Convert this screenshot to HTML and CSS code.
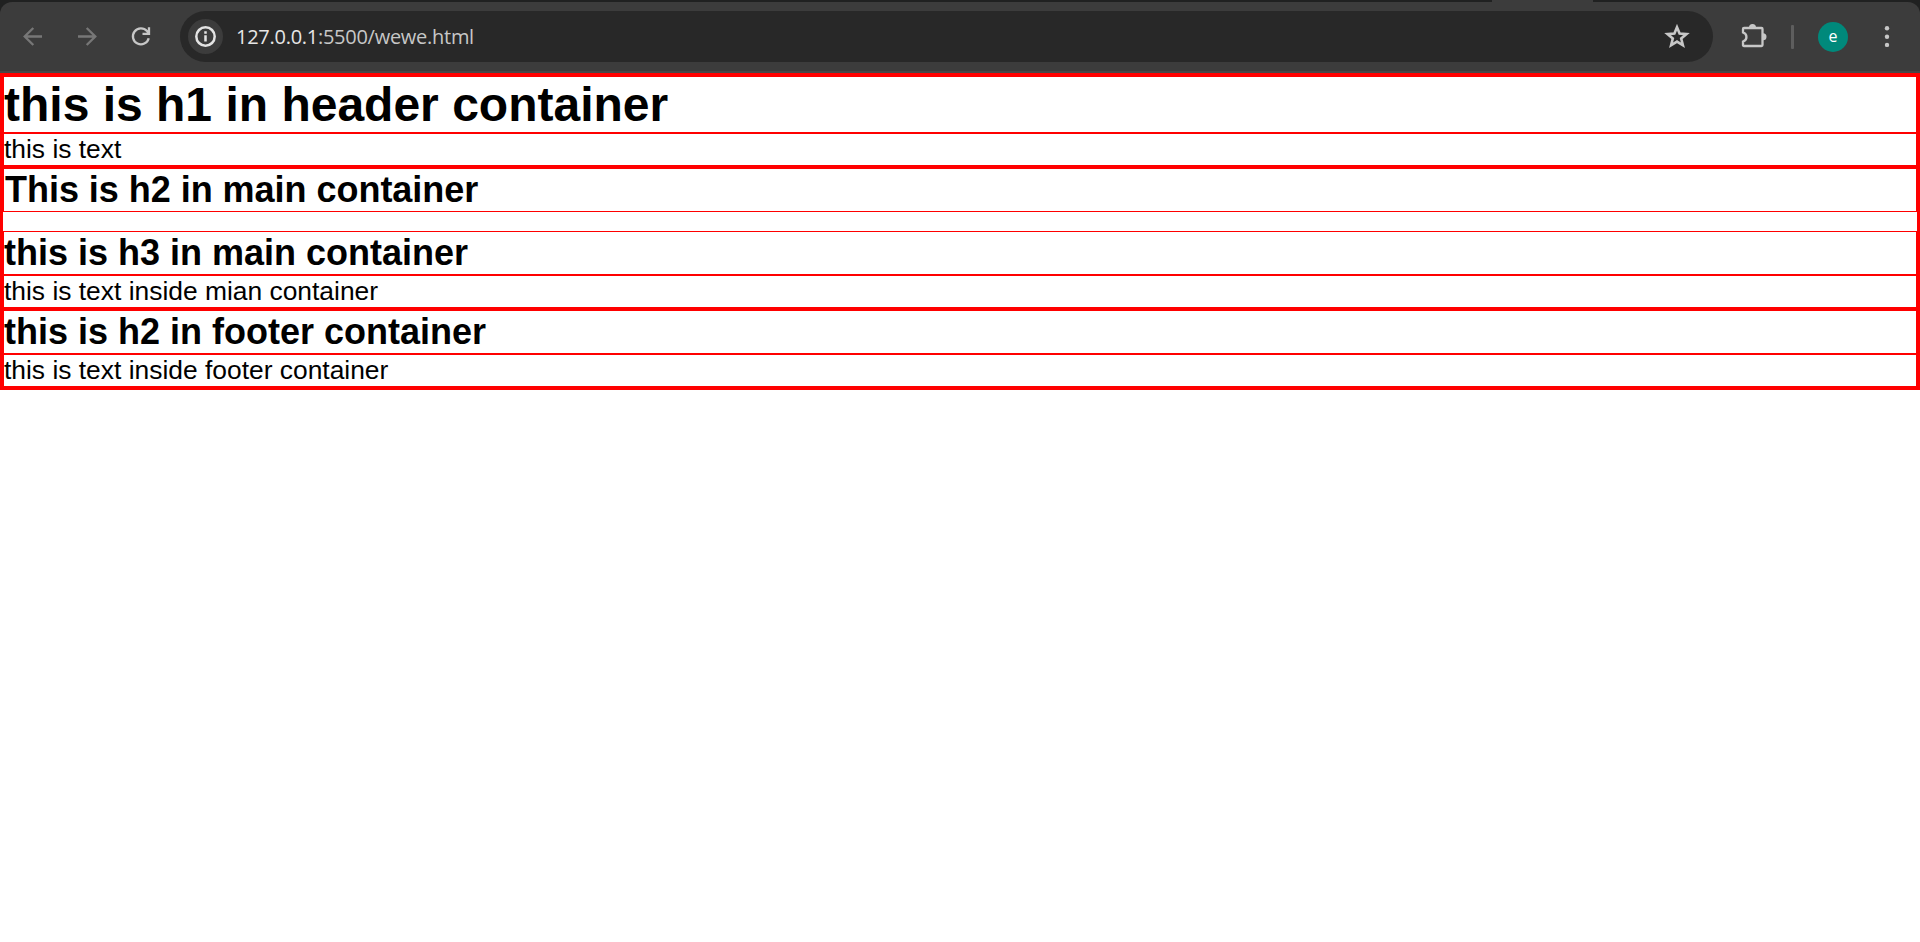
FILE: index.html
```html
<!DOCTYPE html>
<html lang="en">
<head>
<meta charset="utf-8">
<title>wewe</title>
<link rel="stylesheet" href="styles.css">
</head>
<body>
<div class="browser">
  <div class="tab-strip"><div class="active-tab"></div></div>
  <div class="toolbar">
    <svg class="icon back" width="24" height="24" viewBox="0 0 24 24"><path d="M21 12.5H4M12.3 4L3.7 12.5L12.3 21" /></svg>
    <svg class="icon forward" width="24" height="24" viewBox="0 0 24 24"><path d="M2 12.5H19M10.7 4L19.3 12.5L10.7 21" /></svg>
    <svg class="icon reload" width="24" height="24" viewBox="0 0 24 24"><path d="M18.7 14.2A8 8 0 1 1 17 7.1L19 9.4M19 3.2V9.8H12.5" /></svg>
    <div class="address">
      <span class="site-info"><svg width="21" height="21" viewBox="0 0 21 21"><circle cx="10.5" cy="10.5" r="9.2" /><path d="M10.5 9.3V15.5M10.5 5.3V7.8" /></svg></span>
      <span class="url">127.0.0.1<span class="path">:5500/wewe.html</span></span>
      <svg class="star" width="26" height="26" viewBox="0 0 26 26"><path d="M13 3.2L15.6 9.5L22.5 10.1L17.2 14.5L18.9 21.3L13 17.6L7.1 21.3L8.8 14.5L3.5 10.1L10.4 9.5Z" /></svg>
    </div>
    <svg class="puzzle" width="26" height="26" viewBox="0 0 26 26"><path class="outline" d="M3.5 5H20.5Q21.5 5 21.5 6V22Q21.5 23 20.5 23H3Q2 23 2 22V18.6C6.6 17 6.6 11 2 9.4V6Q2 5 3 5Z" /><path class="knob" d="M8 4.5A3.5 3.5 0 0 1 15 4.5ZM22 10.2A3.5 3.5 0 0 1 22 17.2Z" /></svg>
    <span class="divider"></span>
    <span class="avatar">e</span>
    <svg class="menu" width="6" height="24" viewBox="0 0 6 24"><circle cx="3" cy="3.3" r="2.2" /><circle cx="3" cy="11.7" r="2.2" /><circle cx="3" cy="19.9" r="2.2" /></svg>
  </div>
</div>
<div class="document">
  <div class="page">
    <header class="box">
      <h1 class="box title">this is h1 in header container</h1>
      <p class="box text">this is text</p>
    </header>
    <main class="box">
      <h2 class="box heading indent">This is h2 in main container</h2>
      <h3 class="box heading spaced">this is h3 in main container</h3>
      <p class="box text">this is text inside mian container</p>
    </main>
    <footer class="box">
      <h2 class="box heading">this is h2 in footer container</h2>
      <p class="box text">this is text inside footer container</p>
    </footer>
  </div>
</div>
</body>
</html>
```
FILE: styles.css
```css
* { box-sizing: border-box; }
body { margin: 0; background: #fff; color: #000; font-family: "Liberation Sans", Arial, sans-serif; overflow: hidden; }
.browser { height: 73px; background: #202121; }
.tab-strip { height: 2px; display: flex; padding-left: 1492px; }
.active-tab { width: 101px; background: #3c3c3c; }
.toolbar { height: 71px; display: flex; align-items: center; padding: 0 30px 2px 21px; background: #3c3c3c; border-radius: 12px 12px 0 0; border-bottom: 2px solid #474747; }
svg { display: block; flex: none; }
.icon { fill: none; stroke: #c7c7c7; stroke-width: 2.3; }
.back, .forward { stroke: #777; }
.forward { margin-left: 31px; }
.reload { margin-left: 30px; }
.address { margin: 2px 0 0 26px; width: 1533px; height: 51px; display: flex; flex: none; align-items: center; padding: 0 23px 0 8px; border-radius: 26px; background: #282828; }
.site-info { width: 35px; height: 35px; border-radius: 50%; background: #3c3c3c; display: flex; align-items: center; justify-content: center; }
.site-info svg { fill: none; stroke: #e3e3e3; stroke-width: 2.5; }
.url { flex: 1; margin-left: 13px; font: 20px/28px "Open Sans", "Noto Sans", sans-serif; letter-spacing: -0.27px; color: #e6e6e6; white-space: nowrap; }
.path { color: #c7c7c7; }
.star { fill: none; stroke: #c7c7c7; stroke-width: 2.6; }
.puzzle { margin-left: 28px; }
.outline { fill: none; stroke: #c7c7c7; stroke-width: 2.3; }
.knob { fill: #c7c7c7; }
.divider { width: 3px; height: 24px; border-radius: 1px; background: #5e5e5e; margin: 2px 0 0 24px; }
.avatar { width: 30px; height: 30px; border-radius: 50%; background: #00897b; color: #fff; margin: 2px 0 0 24px; font: 400 16px/28px "Open Sans", sans-serif; text-align: center; }
.menu { margin: 2px 0 0 36px; fill: #c7c7c7; }
.document, .page, .box { border: 1px solid #f00; }
h1, h2, h3, p { margin: 0; }
.title { font-size: 48px; line-height: 55px; }
.heading { font-size: 36px; line-height: 42px; }
.indent { text-indent: 1px; letter-spacing: -0.03px; }
.spaced { margin-top: 19px; }
.text { font-size: 26.4px; line-height: 31px; }
```
